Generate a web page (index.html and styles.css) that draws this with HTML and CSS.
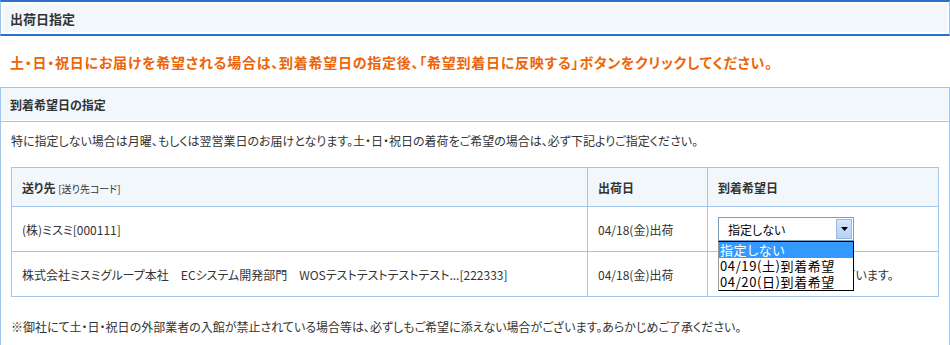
FILE: index.html
```html
<!DOCTYPE html>
<html lang="ja">
<head>
    <meta charset="UTF-8">
    <meta name="viewport" content="width=device-width, initial-scale=1.0">
    <title>出荷日指定</title>
    <link rel="stylesheet" href="styles.css">
</head>
<body>
    <div class="title-box">
        <h1>出荷日指定</h1>
    </div>

    <p class="notice">土・日・祝日にお届けを希望される場合は、到着希望日の指定後、「希望到着日に反映する」ボタンをクリックしてください。</p>

    <section class="panel">
        <h2 class="panel-head">到着希望日の指定</h2>
        <div class="panel-body">
            <p class="lead">特に指定しない場合は月曜、もしくは翌営業日のお届けとなります。土・日・祝日の着荷をご希望の場合は、必ず下記よりご指定ください。</p>

            <table class="ship-table">
                <thead>
                    <tr>
                        <th class="col-dest">送り先 <span class="sub">[送り先コード]</span></th>
                        <th class="col-ship">出荷日</th>
                        <th class="col-arrive">到着希望日</th>
                    </tr>
                </thead>
                <tbody>
                    <tr>
                        <td>(株)ミスミ[000111]</td>
                        <td>04/18(金)出荷</td>
                        <td>
                            <div class="select-wrap">
                                <div class="select">
                                    <span class="select-value">指定しない</span>
                                    <span class="select-btn">
                                        <svg width="7" height="4" viewBox="0 0 7 4"><path d="M0 0h7L3.5 4z" fill="#000"/></svg>
                                    </span>
                                </div>
                                <ul class="select-list">
                                    <li class="selected">指定しない</li>
                                    <li>04/19(土)到着希望</li>
                                    <li>04/20(日)到着希望</li>
                                </ul>
                            </div>
                        </td>
                    </tr>
                    <tr>
                        <td>株式会社ミスミグループ本社　ECシステム開発部門　WOSテストテストテストテスト...[222333]</td>
                        <td>04/18(金)出荷</td>
                        <td>休日配送の対象外となっています。</td>
                    </tr>
                </tbody>
            </table>

            <p class="note">※御社にて土・日・祝日の外部業者の入館が禁止されている場合等は、必ずしもご希望に添えない場合がございます。あらかじめご了承ください。</p>
        </div>
    </section>
</body>
</html>
```

FILE: styles.css
```css
body {
    margin: 0;
    font-family: "Noto Sans CJK JP", "Noto Sans", sans-serif;
    font-feature-settings: "palt";
    font-size: 12px;
    color: #333;
    background-color: #fff;
}

h1, h2, p, ul {
    margin: 0;
    padding: 0;
}

.title-box {
    height: 32px;
    border-top: 2px solid #2a72c9;
    border-bottom: 2px solid #2a72c9;
    border-left: 1px solid #9cc2e8;
    border-right: 1px solid #9cc2e8;
    background-color: #f2f7fb;
    box-shadow: inset 0 0 0 2px #fff;
    display: flex;
    align-items: center;
    padding-left: 9px;
}

.title-box h1 {
    font-size: 13px;
    font-weight: bold;
    color: #333;
}

.notice {
    height: 51px;
    display: flex;
    align-items: center;
    padding-left: 10px;
    font-size: 14px;
    font-weight: bold;
    letter-spacing: 0.75px;
    color: #ec6508;
}

.panel {
    border: 1px solid #a3c7ea;
}

.panel-head {
    height: 33px;
    display: flex;
    align-items: center;
    padding-left: 9px;
    font-size: 12px;
    font-weight: bold;
    background-color: #f2f7fb;
    border-bottom: 1px solid #a3c7ea;
    box-shadow: inset 0 -1px 0 #fff;
}

.panel-body {
    padding: 0 9px 0 10px;
}

.lead {
    height: 36px;
    display: flex;
    align-items: center;
}

.ship-table {
    width: 928px;
    margin-top: 9px;
    border-collapse: collapse;
}

.ship-table th,
.ship-table td {
    border: 1px solid #a3c7ea;
    padding: 0 10px;
    text-align: left;
    white-space: nowrap;
}

.ship-table th {
    height: 38px;
    background-color: #f2f7fb;
    font-size: 12px;
    font-weight: bold;
}

.ship-table td {
    height: 44px;
}

.col-dest {
    width: 555px;
}

.col-ship {
    width: 99px;
}

.ship-table .sub {
    font-size: 10px;
    font-weight: normal;
}

.select-wrap {
    position: relative;
    width: 136px;
}

.select {
    height: 22px;
    border: 1px solid #7f9db9;
    display: flex;
    align-items: center;
    justify-content: space-between;
    background-color: #fff;
}

.select-value {
    padding-left: 9px;
    font-size: 12px;
    color: #000;
}

.select-btn {
    width: 16px;
    height: 20px;
    margin-right: 1px;
    border: 1px solid #9fb7db;
    box-sizing: border-box;
    background: linear-gradient(#d3e5fb, #b4d1f6);
    display: flex;
    align-items: center;
    justify-content: center;
}

.select-list {
    position: absolute;
    top: 24px;
    left: 0;
    width: 136px;
    box-sizing: border-box;
    list-style: none;
    background-color: #fff;
    border: 1px solid #000;
    border-left-color: #999;
    padding: 0;
}

.select-list li {
    height: 16px;
    line-height: 16px;
    padding-left: 1px;
    font-size: 13px;
    letter-spacing: 0.6px;
    color: #000;
}

.select-list li.selected {
    background-color: #3399ff;
    color: #fff;
}

.note {
    height: 58px;
    display: flex;
    align-items: center;
}
```
